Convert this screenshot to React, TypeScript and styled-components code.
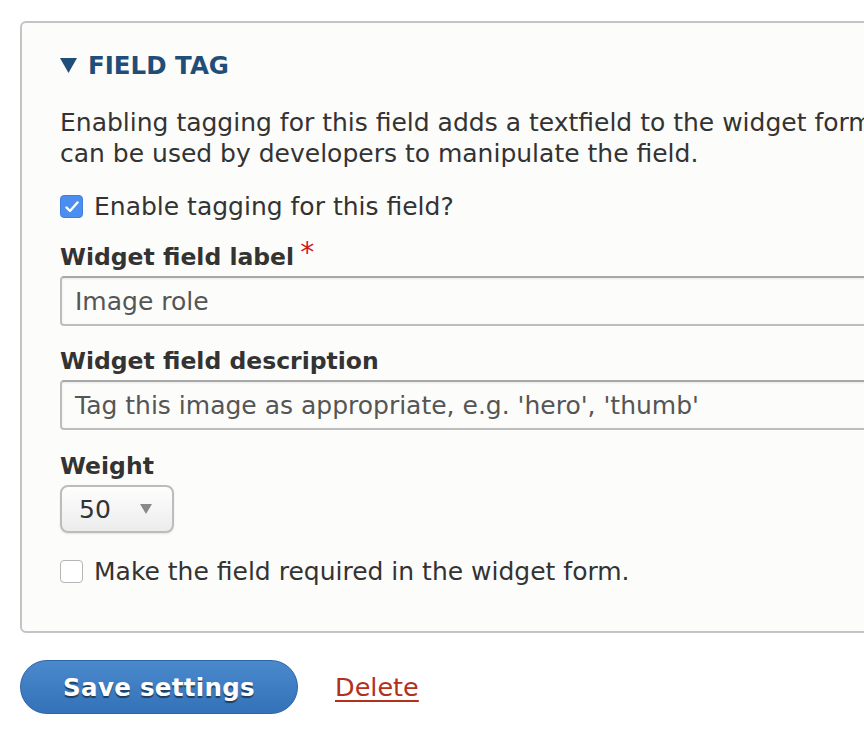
import React from 'react';
import styled, { createGlobalStyle } from 'styled-components';

const GlobalStyle = createGlobalStyle`
  html, body {
    margin: 0;
    background: #fff;
    overflow: hidden;
  }
  body {
    font-family: 'DejaVu Sans', 'Liberation Sans', sans-serif;
    color: #333;
  }
`;

const Page = styled.div`
  padding: 21px 0 0 20px;
  width: 1100px;
`;

const Panel = styled.div`
  border: 2px solid #c4c4c4;
  border-radius: 6px;
  background: #fcfcfa;
  padding: 27px 38px 44px;
`;

const Summary = styled.div`
  display: flex;
  align-items: center;
  gap: 11px;
  font-size: 24.5px;
  line-height: 31px;
  font-weight: bold;
  text-transform: uppercase;
  color: #1f4e79;
`;

const Description = styled.p`
  margin: 26px 0 0;
  font-size: 25px;
  line-height: 31px;
  white-space: nowrap;
`;

const CheckRow = styled.label<{ $gap: number }>`
  display: flex;
  align-items: center;
  gap: 11px;
  margin-top: ${({ $gap }) => $gap}px;
  font-size: 25px;
  line-height: 31px;
`;

const Box = styled.span<{ $checked?: boolean }>`
  width: 23px;
  height: 23px;
  box-sizing: border-box;
  border-radius: 4px;
  display: flex;
  align-items: center;
  justify-content: center;
  background: ${({ $checked }) => ($checked ? '#4c8ef0' : '#fff')};
  border: 1px solid ${({ $checked }) => ($checked ? '#3f7fe0' : '#b5b5b5')};
`;

const Label = styled.div<{ $gap: number }>`
  margin-top: ${({ $gap }) => $gap}px;
  font-size: 23.5px;
  line-height: 31px;
  font-weight: bold;
`;

const Required = styled.span`
  color: #d21a1a;
  font-weight: normal;
  font-size: 28px;
  margin-left: 6px;
  vertical-align: top;
  position: relative;
  top: -5px;
`;

const TextInput = styled.div`
  margin-top: 3px;
  height: 50px;
  box-sizing: border-box;
  border: 2px solid #bdbdbd;
  border-top-color: #a8a8a8;
  border-radius: 4px;
  background: #fcfcfa;
  box-shadow: inset 0 1px 2px rgba(0, 0, 0, 0.08);
  display: flex;
  align-items: center;
  padding-left: 13px;
  font-size: 25px;
  color: #555;
  white-space: nowrap;
`;

const Select = styled.div`
  margin-top: 3px;
  width: 114px;
  height: 48px;
  box-sizing: border-box;
  border: 2px solid #bcbcbc;
  border-radius: 8px;
  background: linear-gradient(#fefefe, #ececec);
  box-shadow: 0 1px 2px rgba(0, 0, 0, 0.1);
  display: flex;
  align-items: center;
  justify-content: space-between;
  padding: 0 20px 0 17px;
  font-size: 25px;
  color: #333;
`;

const Actions = styled.div`
  display: flex;
  align-items: center;
  gap: 37px;
  margin-top: 27px;
`;

const PrimaryButton = styled.button`
  width: 278px;
  height: 54px;
  border-radius: 27px;
  border: 1px solid #2a63a6;
  background: linear-gradient(#4a89cc, #3472b9);
  color: #fff;
  font-family: inherit;
  font-size: 24.5px;
  font-weight: bold;
  text-shadow: 0 2px 1px rgba(0, 0, 0, 0.5);
  letter-spacing: 0.3px;
  padding: 0;
`;

const DeleteLink = styled.a`
  color: #b3301a;
  font-size: 25.5px;
  text-decoration: underline;
  text-underline-offset: 4px;
`;

const Check = () => (
  <svg width="14" height="12" viewBox="0 0 14 12">
    <path d="M1.5 6.5 L5 10 L12.5 1.5" fill="none" stroke="#fff" strokeWidth="2.4" strokeLinecap="round" strokeLinejoin="round" />
  </svg>
);

export default function App() {
  return (
    <Page>
      <GlobalStyle />
      <Panel>
        <Summary>
          <svg width="17" height="15" viewBox="0 0 17 15">
            <path d="M0 0 H17 L8.5 15 Z" fill="#1f4e79" />
          </svg>
          Field tag
        </Summary>
        <Description>
          Enabling tagging for this field adds a textfield to the widget form that
          <br />
          can be used by developers to manipulate the field.
        </Description>
        <CheckRow $gap={22}>
          <Box $checked>
            <Check />
          </Box>
          Enable tagging for this field?
        </CheckRow>
        <Label $gap={20}>
          Widget field label<Required>*</Required>
        </Label>
        <TextInput>Image role</TextInput>
        <Label $gap={20}>Widget field description</Label>
        <TextInput>Tag this image as appropriate, e.g. 'hero', 'thumb'</TextInput>
        <Label $gap={21}>Weight</Label>
        <Select>
          50
          <svg width="12" height="10" viewBox="0 0 12 10">
            <path d="M0 0 H12 L6 10 Z" fill="#888" />
          </svg>
        </Select>
        <CheckRow $gap={23}>
          <Box />
          Make the field required in the widget form.
        </CheckRow>
      </Panel>
      <Actions>
        <PrimaryButton>Save settings</PrimaryButton>
        <DeleteLink href="#">Delete</DeleteLink>
      </Actions>
    </Page>
  );
}
